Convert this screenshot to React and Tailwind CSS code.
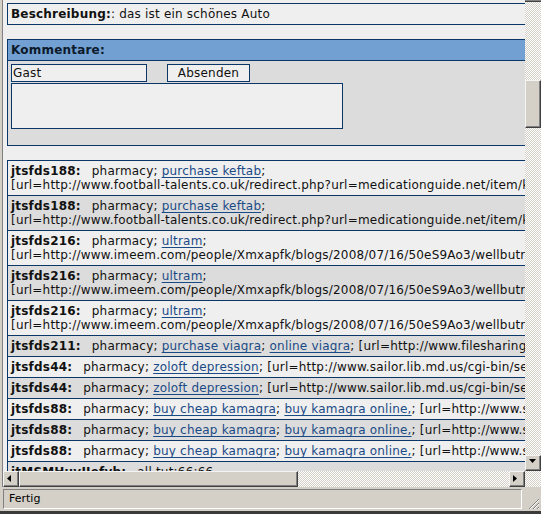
import React from "react";

const checker =
  "bg-[image:repeating-conic-gradient(#ffffff_0%_25%,#d4d0c8_0%_50%)] bg-[length:2px_2px]";
const winBtn =
  "bg-[#d4d0c8] border border-t-[#f4f4f4] border-l-[#f4f4f4] border-r-[#404040] border-b-[#404040] shadow-[inset_-1px_-1px_0_#808080]";

function Link({ children }) {
  return (
    <a href="#" className="text-[#1a4a86] underline underline-offset-2">
      {children}
    </a>
  );
}

function Row({ dark, name, url, children }) {
  return (
    <div
      className={
        dark
          ? "border-b border-[#0b3768] bg-[#dcdcdc] px-[3px] py-[3px] whitespace-nowrap"
          : "border-b border-[#0b3768] bg-[#efefef] px-[3px] py-[3px] whitespace-nowrap"
      }
    >
      <div>
        <b>{name}</b>
        <span className="ml-[11px]">{children}</span>
      </div>
      {url && <div>{url}</div>}
    </div>
  );
}

function Arrow({ dir }) {
  const pts = {
    down: "0,0 7,0 3.5,4",
    left: "4,0 4,7 0,3.5",
    right: "0,0 0,7 4,3.5",
  }[dir];
  return (
    <svg width="8" height="8" viewBox="0 0 8 8" className="block">
      <polygon points={pts} fill="#000" />
    </svg>
  );
}

export default function App() {
  const football =
    "[url=http://www.football-talents.co.uk/redirect.php?url=medicationguide.net/item/keftab.html]purchase keftab[/url]";
  const imeem =
    "[url=http://www.imeem.com/people/Xmxapfk/blogs/2008/07/16/50eS9Ao3/wellbutrin-online]ultram[/url]";

  return (
    <div className="w-[541px] h-[514px] flex flex-col bg-[#d4d0c8] overflow-hidden font-['DejaVu_Sans',Verdana,sans-serif] text-[#111111]">
      {/* page area + vertical scrollbar */}
      <div className="flex h-[471px]">
        <div className="w-[2px] bg-[#d4d0c8]" />
        <div className="w-[1px] bg-[#808080]" />
        <div className="flex-1 overflow-hidden bg-[#efefef] pt-[3px] text-[12px] leading-[14px] tracking-[0.2px]">
          <div className="w-[1100px] pl-[4px]">
            {/* Beschreibung */}
            <div className="border border-[#0b3768] bg-[#efefef] px-[3px] py-[3px]">
              <b>Beschreibung:</b>: das ist ein schönes Auto
            </div>

            {/* Kommentare */}
            <div className="mt-[14px] border border-[#0b3768]">
              <div className="border-b border-[#0b3768] bg-[#72a0d2] px-[3px] py-[3px] font-bold text-[#0c1a2b]">
                Kommentare:
              </div>
              <div className="bg-[#dcdcdc] px-[3px] pt-[3px] pb-[16px]">
                <div className="flex">
                  <input
                    defaultValue="Gast"
                    className="h-[18px] w-[136px] border border-[#0b3768] bg-[#efefef] px-[1px] text-[12px] leading-[14px] tracking-[0.2px] outline-none"
                  />
                  <button className="ml-[20px] h-[18px] w-[83px] border border-[#0b3768] bg-[#efefef] text-[12px] leading-[14px] tracking-[0.2px]">
                    Absenden
                  </button>
                </div>
                <textarea className="mt-[1px] block h-[46px] w-[332px] resize-none border border-[#0b3768] bg-[#efefef] outline-none" />
              </div>
            </div>

            {/* Comment list */}
            <div className="mt-[14px] border-l border-t border-[#0b3768]">
              <Row name="jtsfds188:" url={football}>
                pharmacy; <Link>purchase keftab</Link>;
              </Row>
              <Row dark name="jtsfds188:" url={football}>
                pharmacy; <Link>purchase keftab</Link>;
              </Row>
              <Row name="jtsfds216:" url={imeem}>
                pharmacy; <Link>ultram</Link>;
              </Row>
              <Row dark name="jtsfds216:" url={imeem}>
                pharmacy; <Link>ultram</Link>;
              </Row>
              <Row name="jtsfds216:" url={imeem}>
                pharmacy; <Link>ultram</Link>;
              </Row>
              <Row dark name="jtsfds211:">
                pharmacy; <Link>purchase viagra</Link>; <Link>online viagra</Link>;
                [url=http://www.filesharingpoint.com/viagra.html]online viagra[/url]
              </Row>
              <Row name="jtsfds44:">
                pharmacy; <Link>zoloft depression</Link>;
                [url=http://www.sailor.lib.md.us/cgi-bin/search/zoloft]zoloft depression[/url]
              </Row>
              <Row dark name="jtsfds44:">
                pharmacy; <Link>zoloft depression</Link>;
                [url=http://www.sailor.lib.md.us/cgi-bin/search/zoloft]zoloft depression[/url]
              </Row>
              <Row name="jtsfds88:">
                pharmacy; <Link>buy cheap kamagra</Link>; <Link>buy kamagra online,</Link>;
                [url=http://www.someplace.com/kamagra]buy cheap kamagra[/url]
              </Row>
              <Row dark name="jtsfds88:">
                pharmacy; <Link>buy cheap kamagra</Link>; <Link>buy kamagra online,</Link>;
                [url=http://www.someplace.com/kamagra]buy cheap kamagra[/url]
              </Row>
              <Row name="jtsfds88:">
                pharmacy; <Link>buy cheap kamagra</Link>; <Link>buy kamagra online,</Link>;
                [url=http://www.someplace.com/kamagra]buy cheap kamagra[/url]
              </Row>
              <Row dark name="jtMSMHuvJIefvb:">
                all.tut;66;66
              </Row>
            </div>
          </div>
        </div>

        {/* vertical scrollbar */}
        <div className="flex w-[16px] flex-col">
          <div className="h-[1px] bg-[#808080]" />
          <div className="h-[1px] bg-[#404040]" />
          <div className={`h-[78px] ${checker}`} />
          <div className={`h-[48px] ${winBtn}`} />
          <div className={`flex-1 ${checker}`} />
          <div className={`flex h-[16px] items-center justify-center ${winBtn}`}>
            <Arrow dir="down" />
          </div>
        </div>
      </div>

      {/* horizontal scrollbar */}
      <div className="flex h-[16px]">
        <div className="w-[2px] bg-[#d4d0c8]" />
        <div className="w-[1px] bg-[#808080]" />
        <div className={`flex w-[16px] items-center justify-center ${winBtn}`}>
          <Arrow dir="left" />
        </div>
        <div className={`w-[279px] ${winBtn}`} />
        <div className={`flex-1 ${checker}`} />
        <div className={`flex w-[16px] items-center justify-center ${winBtn}`}>
          <Arrow dir="right" />
        </div>
        <div className={`w-[16px] ${checker}`} />
      </div>

      {/* status bar */}
      <div className="flex h-[24px] items-start pt-[2px]">
        <div className="ml-[3px] flex h-[20px] w-[519px] items-center border border-t-[#808080] border-l-[#808080] border-b-white border-r-white pl-[5px] text-[11px] text-black">
          Fertig
        </div>
        <div className="flex flex-1 items-end justify-end self-stretch pr-[1px] pb-[1px]">
          <svg width="12" height="12" viewBox="0 0 12 12">
            <path d="M11 1 L1 11 M11 5 L5 11 M11 9 L9 11" stroke="#808080" strokeWidth="1" />
            <path d="M11 2 L2 11 M11 6 L6 11 M11 10 L10 11" stroke="#ffffff" strokeWidth="1" />
          </svg>
        </div>
      </div>
      <div className="h-[3px] bg-[#3b3b3b]" />
    </div>
  );
}
